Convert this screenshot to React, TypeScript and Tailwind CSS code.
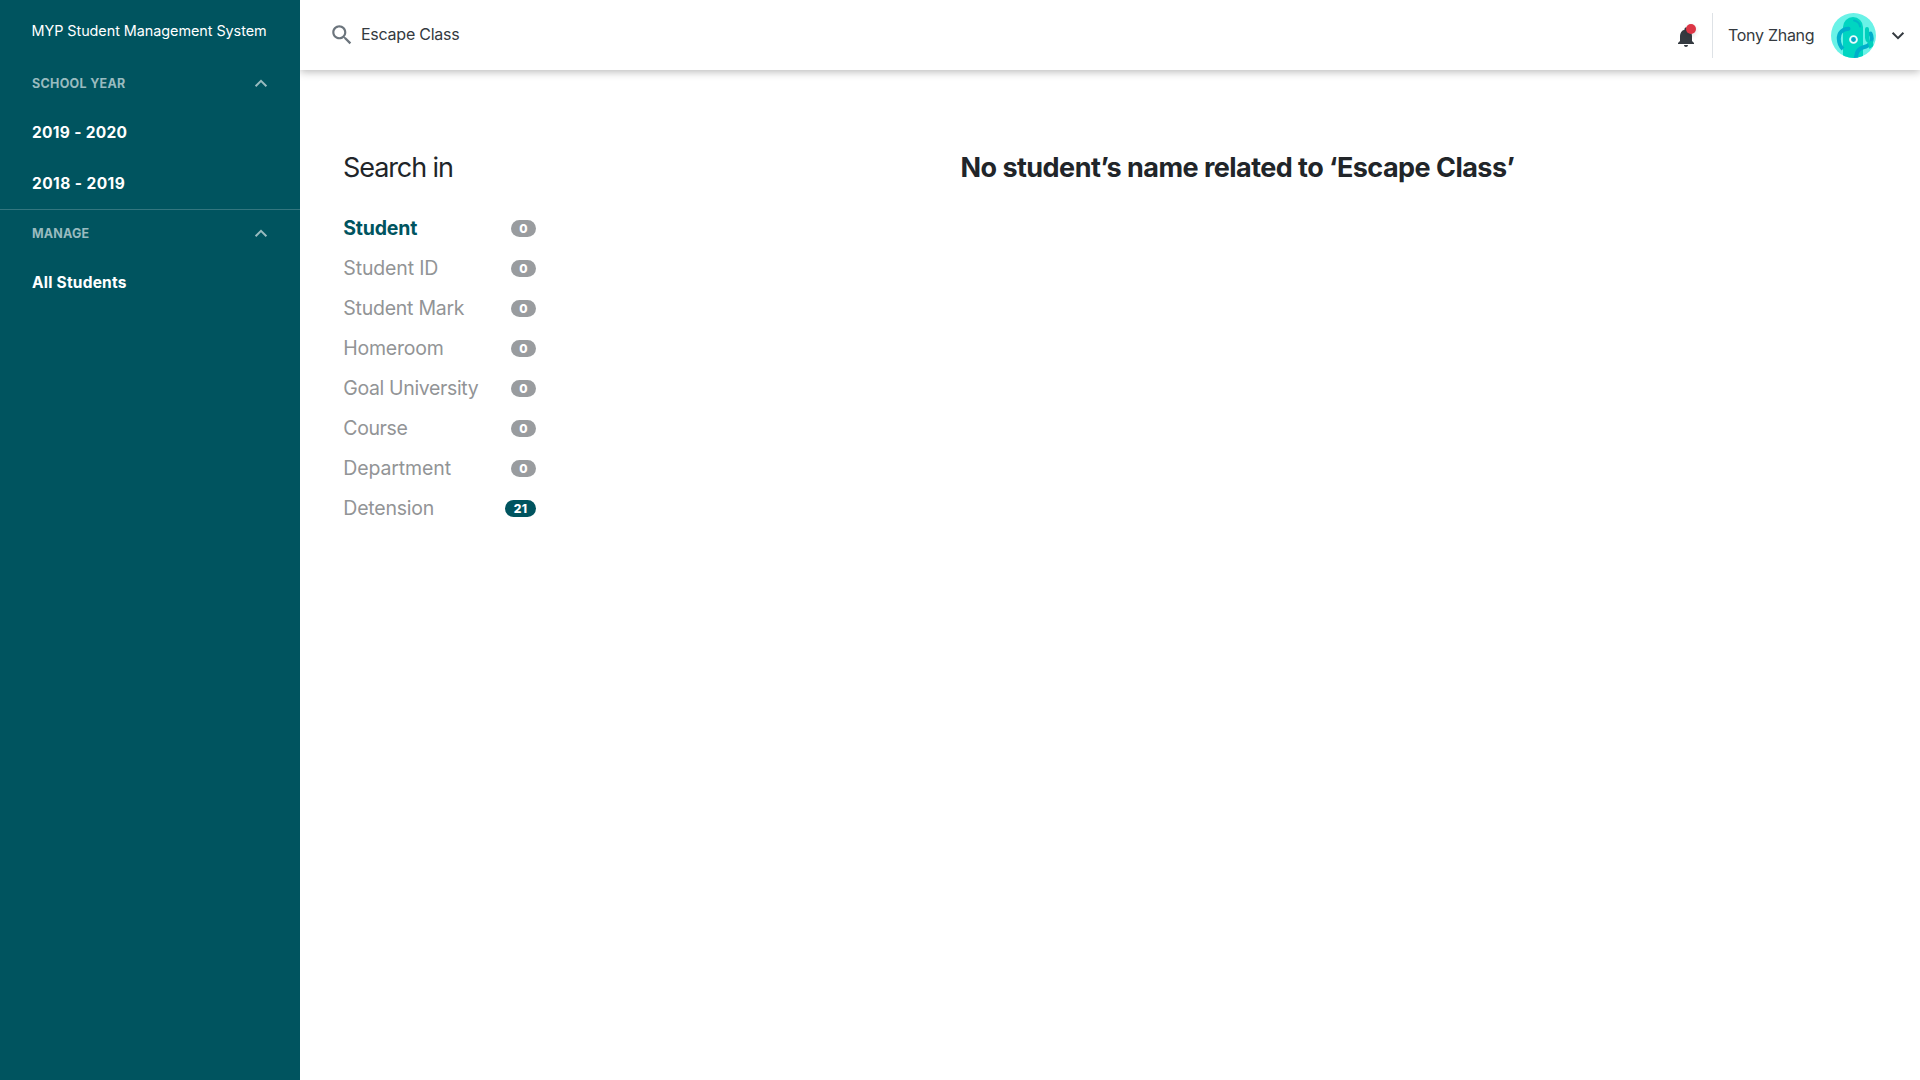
import React from "react";

const filters = [
  { label: "Student", count: 0, cls: "font-bold text-[#00545f] tracking-[-0.2px]" },
  { label: "Student ID", count: 0, cls: "text-[#929496] tracking-[-0.15px]" },
  { label: "Student Mark", count: 0, cls: "text-[#929496] tracking-[-0.25px]" },
  { label: "Homeroom", count: 0, cls: "text-[#929496] tracking-[-0.24px]" },
  { label: "Goal University", count: 0, cls: "text-[#929496] tracking-[-0.36px]" },
  { label: "Course", count: 0, cls: "text-[#929496] tracking-[-0.4px]" },
  { label: "Department", count: 0, cls: "text-[#929496] tracking-[-0.12px]" },
  { label: "Detension", count: 21, cls: "text-[#929496] tracking-[-0.22px]" },
];

function Chevron({ up = false, className = "" }: { up?: boolean; className?: string }) {
  return (
    <svg width="14" height="9" viewBox="0 0 14 9" fill="none" stroke="currentColor" strokeWidth="2" className={className}>
      <path d={up ? "M1.6 7.3 7 1.9l5.4 5.4" : "M1.6 1.7 7 7.1l5.4-5.4"} />
    </svg>
  );
}

function SectionTitle({ title, className }: { title: string; className: string }) {
  return (
    <div className="flex h-[49px] items-center justify-between pl-8 pr-8 text-[#99bbbf]">
      <span className={"text-[12.5px] font-bold leading-4 " + className}>{title}</span>
      <Chevron up />
    </div>
  );
}

function SidebarLink({ label, className }: { label: string; className: string }) {
  return (
    <a className={"flex h-[51px] items-center pl-8 text-[15.5px] font-bold text-white " + className}>{label}</a>
  );
}

function Avatar() {
  return (
    <svg width="45" height="45" viewBox="0 0 45 45">
      <defs>
        <clipPath id="face"><circle cx="22.5" cy="22.5" r="22.5" /></clipPath>
      </defs>
      <g clipPath="url(#face)">
        <rect width="45" height="45" fill="#6af2e7" />
        <path d="M12 46V14a10 10 0 0 1 20 0v32z" fill="#00d5c1" />
        <path d="M23 7.5q5.5 1 6 6" fill="none" stroke="#00b9c6" strokeWidth="2" strokeLinecap="round" />
        <path d="M17.500 15.800C11 16.200 7.500 20 7.800 26c.2 5 2 8 4.200 10" fill="none" stroke="#00aecb" strokeWidth="4" />
        <circle cx="17.500" cy="15.800" r="2" fill="#00aecb" />
        <path d="M39.500 20.500q2.500 5 0 9.500-2 3.200-7 4.300c-4.500 1-7 4.700-7.500 9.700" fill="none" stroke="#00aecb" strokeWidth="4" strokeLinecap="round" />
        <path d="M34 16a2 2 0 0 1 4 0l.5 12q2 1 3-1l1 6-4 3-1.500-6q-3-2-3-5z" fill="#00d0bd" />
        <circle cx="22.500" cy="26.500" r="3.400" fill="#00a9c8" stroke="#e9fdfb" strokeWidth="1.900" />
      </g>
    </svg>
  );
}

export default function App() {
  return (
    <div className="flex h-[1080px] w-[1920px] overflow-hidden bg-white font-['Inter',sans-serif] text-[#212529]">
      <aside className="relative z-10 w-[300px] shrink-0 bg-[#00545f]">
        <h1 className="flex h-[59px] items-center pl-[31.5px] pt-[3px] text-[14.4px] tracking-[-0.05px] text-white">
          MYP Student Management System
        </h1>
        <SectionTitle title="SCHOOL YEAR" className="tracking-[0.3px]" />
        <nav className="-mt-px h-[102px] border-b border-[#33767f] [box-sizing:content-box]">
          <SidebarLink label="2019 - 2020" className="tracking-[0.3px]" />
          <SidebarLink label="2018 - 2019" className="tracking-[0.42px]" />
        </nav>
        <div className="-mt-px">
          <SectionTitle title="MANAGE" className="tracking-[0.15px]" />
        </div>
        <nav className="-mt-px">
          <SidebarLink label="All Students" className="tracking-[0.22px]" />
        </nav>
      </aside>

      <div className="flex grow flex-col">
        <header className="flex h-[70px] shrink-0 items-center justify-between pl-[28.5px] pr-[15px] pt-px text-[#343a40] shadow-[0_2px_8px_rgba(0,0,0,0.27)]">
          <div className="flex items-center gap-[6.500px] pb-[2px]">
            <svg width="26" height="26" viewBox="0 0 24 24" fill="#6c757d">
              <path d="M15.500 14h-.79l-.28-.27C15.410 12.590 16 11.110 16 9.500 16 5.910 13.090 3 9.500 3S3 5.910 3 9.500 5.910 16 9.500 16c1.610 0 3.090-.59 4.230-1.570l.27.28v.79l5 4.990L20.490 19l-4.990-5zm-6 0C7.010 14 5 11.990 5 9.500S7.010 5 9.500 5 14 7.010 14 9.500 11.990 14 9.500 14z" />
            </svg>
            <span className="pb-[2px] text-[16px] tracking-[-0.25px]">Escape Class</span>
          </div>
          <div className="flex items-center">
            <div className="relative size-6">
              <svg width="24" height="24" viewBox="0 0 24 24" fill="#343a40" className="relative top-[1.500px]">
                <path d="M12 22c1.100 0 2-.9 2-2h-4c0 1.100.89 2 2 2zm6-6v-5c0-3.070-1.640-5.640-4.500-6.320V4c0-.83-.67-1.500-1.500-1.500s-1.500.67-1.500 1.500v.68C7.630 5.360 6 7.920 6 11v5l-2 2v1h16v-1l-2-2z" />
              </svg>
              <span className="absolute left-3 top-0 size-[10px] rounded-full bg-[#dc3545] shadow-[0_2px_5px_rgba(0,0,0,0.14)]" />
            </div>
            <div className="ml-[14px] h-[45px] w-px bg-[#dee2e6]" />
            <span className="ml-[15px] w-[86.5px] whitespace-nowrap pb-[2px] text-[16px] tracking-[-0.29px]">Tony Zhang</span>
            <div className="ml-[16.500px]"><Avatar /></div>
            <Chevron className="ml-[15px]" />
          </div>
        </header>

        <main className="flex pl-[43px] pt-[78px]">
          <section className="w-[193px] shrink-0">
            <h2 className="h-10 whitespace-nowrap text-[27px] leading-10 tracking-[-1.090px]">Search in</h2>
            <ul className="pt-5">
              {filters.map((f) => (
                <li key={f.label} className="flex h-10 items-center justify-between">
                  <span className={"whitespace-nowrap pl-[0.3px] text-[19.500px] leading-7 " + f.cls}>{f.label}</span>
                  <span
                    className={
                      "flex h-[17px] items-center justify-center rounded-full pt-px text-[12px] font-extrabold leading-none text-white " +
                      (f.count ? "w-[31px] bg-[#00545f] tracking-[0.4px]" : "w-[25px] bg-[#999c9f]")
                    }
                  >
                    {f.count}
                  </span>
                </li>
              ))}
            </ul>
          </section>
          <h2 className="ml-[424.5px] whitespace-nowrap text-[27px] font-bold leading-10 tracking-[-0.540px]">
            No student’s name related to ‘Escape Class’
          </h2>
        </main>
      </div>
    </div>
  );
}
